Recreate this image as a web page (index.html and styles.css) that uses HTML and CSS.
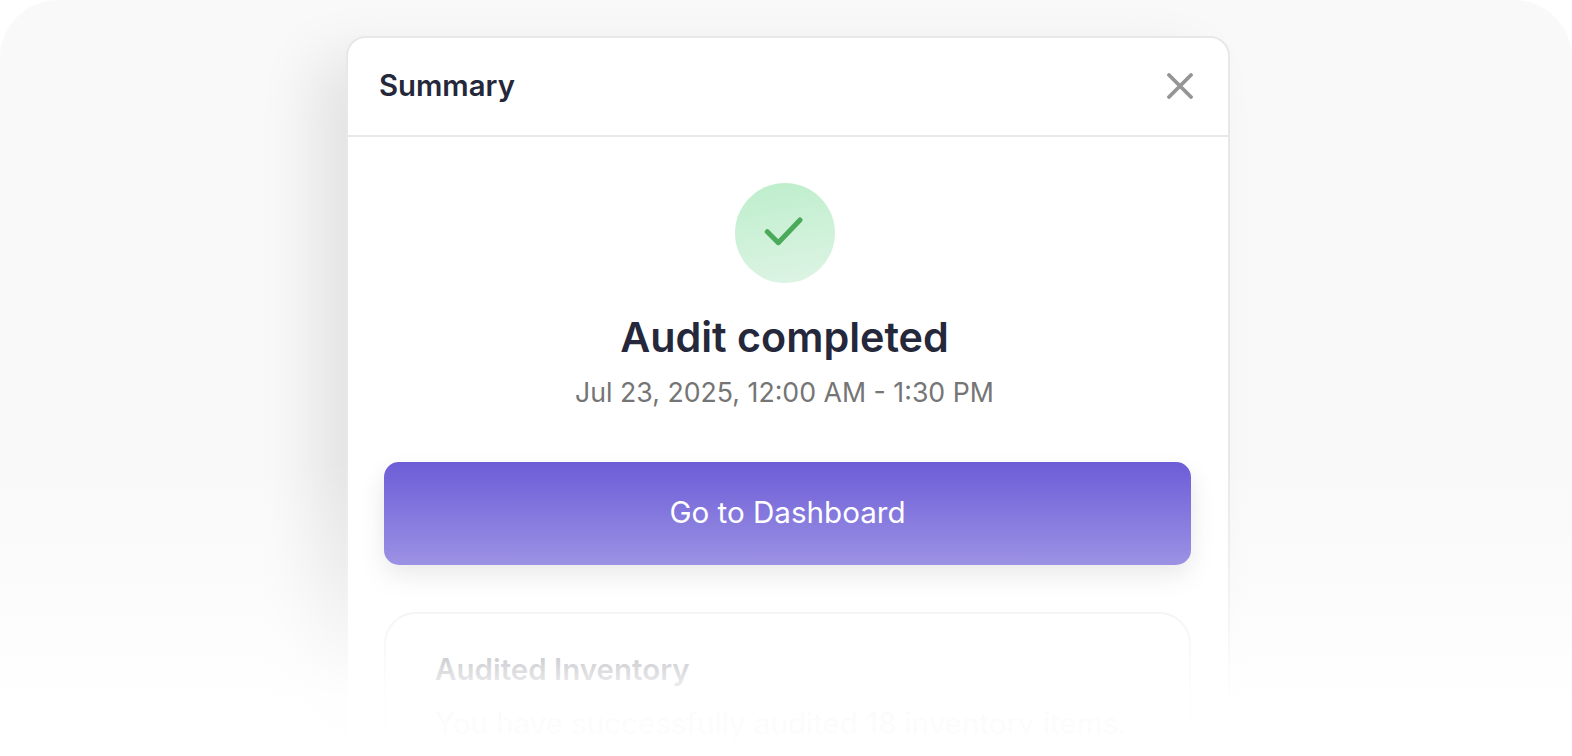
FILE: index.html
```html
<!DOCTYPE html>
<html lang="en">
  <head>
    <meta charset="UTF-8" />
    <meta name="viewport" content="width=device-width, initial-scale=1.0" />
    <title>Audit Summary</title>
    <link rel="stylesheet" href="styles.css">
  </head>
  <body>
    <div class="stage">
      <div class="modal">
        <div class="modal-header">
          <div class="modal-title">Summary</div>
          <svg class="close-icon" width="26" height="26" viewBox="0 0 26 26" fill="none">
            <path d="M2 2L24 24M24 2L2 24" stroke="#959595" stroke-width="3.8" stroke-linecap="round" />
          </svg>
        </div>

        <div class="modal-body">
          <div class="status">
            <div class="status-circle">
              <svg width="41" height="32" viewBox="0 0 41 32" fill="none">
                <path d="M3.3 14.7L14.3 25.7L36 3" stroke="#4aaa5a" stroke-width="5" stroke-linecap="round" stroke-linejoin="round" />
              </svg>
            </div>
            <h1 class="status-title">Audit completed</h1>
            <div class="status-date">Jul 23, 2025, 12:00 AM - 1:30 PM</div>
          </div>

          <button type="button" class="dashboard-button">Go to Dashboard</button>

          <div class="inventory-card">
            <div class="inventory-title">Audited Inventory</div>
            <div class="inventory-text">You have successfully audited 18 inventory items.</div>
          </div>
        </div>
      </div>
      <div class="fade"></div>
    </div>
  </body>
</html>
```

FILE: styles.css
```css
* {
  margin: 0;
  padding: 0;
  box-sizing: border-box;
}

body {
  font-family: Inter, "Noto Sans", sans-serif;
  background: white;
  height: 100vh;
  overflow: hidden;
}

.stage {
  position: relative;
  height: 756px;
  padding-top: 36px;
  background: #f9f9f9;
  border-radius: 58px 58px 0 0;
  overflow: hidden;
}

.modal {
  width: 884px;
  height: 900px;
  margin-left: 346px;
  background: white;
  border: 2px solid #e8e8e8;
  border-radius: 20px;
  box-shadow: -32px 20px 60px rgba(0, 0, 0, 0.09);
}

.modal-header {
  height: 99px;
  padding: 0 35px 2px 31px;
  border-bottom: 2px solid #e8e8e8;
  display: flex;
  align-items: center;
  justify-content: space-between;
}

.modal-title {
  margin-bottom: 1px;
  font-size: 29.3px;
  font-weight: 600;
  color: #25273a;
}

.modal-body {
  padding: 46px 37px 0 36px;
  display: flex;
  flex-direction: column;
  align-items: center;
}

.status {
  width: 100%;
  padding-right: 6px;
  display: flex;
  flex-direction: column;
  align-items: center;
}

.status-circle {
  width: 100px;
  height: 100px;
  border-radius: 50%;
  background: linear-gradient(170deg, #bdeecb 0%, #def4e5 100%);
  display: flex;
  align-items: center;
  justify-content: center;
}

.status-title {
  margin-top: 28px;
  font-size: 41.3px;
  line-height: 52px;
  font-weight: 600;
  color: #25273a;
}

.status-date {
  margin-top: 13px;
  font-size: 26.7px;
  line-height: 32px;
  color: #757575;
}

.dashboard-button {
  width: 100%;
  height: 103px;
  margin-top: 54px;
  padding-bottom: 4px;
  border: none;
  border-radius: 15px;
  background: #6c5dd7;
  box-shadow: 0 12px 24px rgba(0, 0, 0, 0.12);
  color: white;
  font-family: inherit;
  font-size: 29.6px;
}

.inventory-card {
  width: 100%;
  height: 300px;
  margin-top: 47px;
  padding: 37px 49px;
  border: 2px solid #e8e8e8;
  border-radius: 32px;
}

.inventory-title {
  font-size: 29.5px;
  font-weight: 600;
  color: #25273a;
}

.inventory-text {
  margin-top: 18px;
  font-size: 29.5px;
  color: #757575;
}

.fade {
  position: absolute;
  left: 0;
  right: 0;
  bottom: 0;
  height: 295px;
  background: linear-gradient(
    180deg,
    rgba(255, 255, 255, 0) 0%,
    rgba(255, 255, 255, 0.32) 35%,
    rgba(255, 255, 255, 0.84) 71%,
    rgba(255, 255, 255, 0.97) 81%,
    rgba(255, 255, 255, 0.98) 92%,
    white 96%
  );
}
```
